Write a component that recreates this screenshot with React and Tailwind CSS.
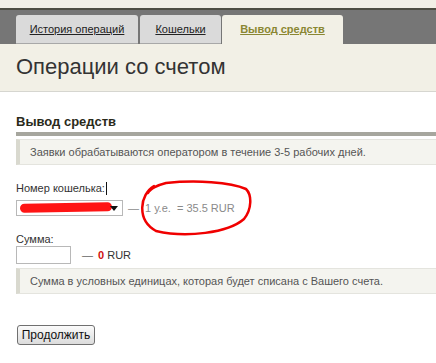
import React from 'react';

const Note = ({ children }) => (
  <div className="ml-4 flex h-[26px] items-center border-y border-l-[4px] border-y-[#e4e4de] border-l-[#d9d9cf] bg-[#f4f4ef] pl-[10px] text-[11px] text-[#555]">
    {children}
  </div>
);

export default function App() {
  return (
    <div className="relative w-[436px] h-[363px] overflow-hidden bg-white font-['Liberation_Sans',Arial,sans-serif] text-[#222]">
      {/* Top tabs bar */}
      <div className="h-[8px] bg-[#f2f0e6]" />
      <div className="h-[2px] bg-[#4e4e42]" />
      <div className="flex h-[34px] items-end bg-[#767676] pl-4">
        <div className="flex h-[29px] w-[122px] items-center justify-center rounded-t-[3px] border-b border-[#a8a8a8] bg-[#dadada] text-[11px] text-[#222] underline">
          История операций
        </div>
        <div className="ml-[2px] flex h-[29px] w-[81px] items-center justify-center rounded-t-[3px] border-b border-[#a8a8a8] bg-[#dadada] text-[11px] text-[#222] underline">
          Кошельки
        </div>
        <div className="ml-[1px] flex h-[29px] w-[121px] items-center justify-center rounded-t-[3px] bg-[#f2f0e6] text-[11px] font-bold text-[#8a8733] underline">
          Вывод средств
        </div>
      </div>

      {/* Header */}
      <div className="h-[48px] border-b border-[#d6d6d0] bg-[#f2f0e6] pl-4 pt-[9px]">
        <h1 className="text-[22px] leading-[28px] text-[#333]">Операции со счетом</h1>
      </div>

      {/* Section */}
      <div className="pt-[22px]">
        <h2 className="ml-4 text-[13px] font-bold leading-[16px] text-[#2a2a1a]">Вывод средств</h2>
        <div className="ml-4 mt-[2px] h-[4px] bg-[#a6a69e]" />
        <div className="mt-[3px]">
          <Note>Заявки обрабатываются оператором в течение 3-5 рабочих дней.</Note>
        </div>

        <div className="ml-4 mt-[16px] flex items-center text-[11px] leading-[14px] text-[#333]">
          Номер кошелька:
          <span className="ml-[1px] inline-block h-[13px] w-px bg-[#111]" />
        </div>
        <div className="ml-4 mt-[5px] flex h-[16px] items-center text-[11px]">
          <div className="relative flex h-[16px] w-[107px] items-center justify-end border border-[#b8b8b8] bg-white pr-[4px]">
            <div className="absolute left-[3px] top-[2px] h-[9px] w-[92px] -rotate-1 rounded-full bg-[#ff1414]" />
            <svg width="8" height="5" viewBox="0 0 8 5" className="relative">
              <path d="M0 0h8L4 5z" fill="#111" />
            </svg>
          </div>
          <span className="ml-[5px] text-[#888]">—</span>
          <span className="ml-[6px] text-[#8a8a8a]">1 у.е. &nbsp;= 35.5 RUR</span>
        </div>

        <div className="ml-4 mt-[16px] text-[11px] leading-[14px] text-[#333]">Сумма:</div>
        <div className="ml-4 flex h-[18px] items-center text-[11px]">
          <div className="h-[18px] w-[55px] border border-[#b8b8b8] bg-white" />
          <span className="ml-[11px] text-[#666]">—</span>
          <span className="ml-[5px] text-[#333]">
            <b className="font-bold text-[#d01010]">0</b> RUR
          </span>
        </div>
        <div className="mt-[4px]">
          <Note>Сумма в условных единицах, которая будет списана с Вашего счета.</Note>
        </div>

        <button className="ml-[17px] mt-[31px] h-[20px] w-[78px] rounded-[3px] border border-[#707070] bg-gradient-to-b from-[#fbfbfb] to-[#dcdcdc] text-[12px] leading-[18px] text-[#111]">
          Продолжить
        </button>
      </div>

      {/* red hand-drawn annotation */}
      <svg className="pointer-events-none absolute left-[134px] top-[180px]" width="124" height="60" viewBox="0 0 124 60">
        <path
          d="M20 6 C6 14 2 40 22 51 C52 58 94 53 110 39 C118 29 118 15 112 9 C96 2 62 0 32 3 C24 5 16 9 14 13"
          fill="none"
          stroke="#f00000"
          strokeWidth="2.5"
          strokeLinecap="round"
        />
      </svg>
    </div>
  );
}
